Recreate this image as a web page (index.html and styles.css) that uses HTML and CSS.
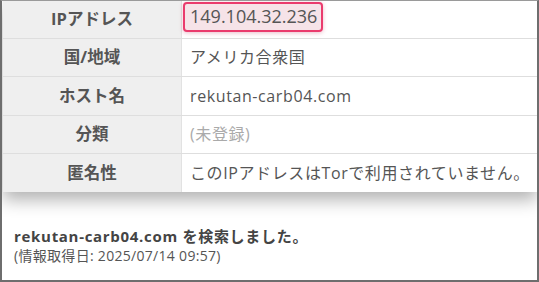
FILE: index.html
```html
<!DOCTYPE html>
<html lang="ja">
<head>
<meta charset="utf-8">
<link rel="stylesheet" href="styles.css">
</head>
<body>
<div class="frame">
  <table class="info">
    <tr><th>IPアドレス</th><td><span class="ip">149.104.32.236</span></td></tr>
    <tr><th>国/地域</th><td>アメリカ合衆国</td></tr>
    <tr><th>ホスト名</th><td>rekutan-carb04.com</td></tr>
    <tr><th>分類</th><td class="muted">(未登録)</td></tr>
    <tr><th>匿名性</th><td>このIPアドレスはTorで利用されていません。</td></tr>
  </table>
  <div class="result">
    <p class="searched">rekutan-carb04.com を検索しました。</p>
    <p class="date">(情報取得日: 2025/07/14 09:57)</p>
  </div>
</div>
</body>
</html>
```
FILE: styles.css
```css
html, body {
  margin: 0;
  padding: 0;
  background: #fff;
}
body {
  font-family: "Open Sans", "Noto Sans CJK JP", sans-serif;
  color: #555;
}
.frame {
  box-sizing: border-box;
  width: 539px;
  height: 282px;
  border: 2px solid #6e6e6e;
  border-top: 1px solid #9a9a9a;
  background: #fff;
  overflow: hidden;
  display: flex;
  flex-direction: column;
}
.info {
  position: relative;
  z-index: 1;
  margin: -1px 0 0 1px;
  width: 534px;
  border-collapse: collapse;
  background: #fff;
  box-shadow: 0 8px 16px rgba(0, 0, 0, 0.3);
}
.info th, .info td {
  height: 37.5px;
  padding: 0;
  border-bottom: 1px solid #dedede;
  font-size: 16px;
  line-height: 1;
}
.info tr:last-child th, .info tr:last-child td {
  border-bottom: none;
}
.info th {
  width: 178px;
  background: #efefef;
  border-right: 1px solid #e2e2e2;
  font-weight: bold;
  color: #555;
  text-align: center;
  font-size: 16.5px;
}
.info td {
  padding-left: 8px;
  color: #555;
  letter-spacing: 0.6px;
}
.info td.muted {
  color: #aaa;
}
.ip {
  display: inline-block;
  margin-left: -7px;
  margin-top: -4px;
  padding: 3px 4px 3px 5px;
  border: 2px solid #ea3b6d;
  border-radius: 4px;
  background: #f6e3e8;
  box-shadow: 0 1px 4px rgba(200, 60, 100, 0.35);
  font-size: 18px;
  line-height: 1.1;
  letter-spacing: 0;
}
.result {
  background: #fff;
  flex: 1;
  padding: 34px 0 0 12px;
}
.result p {
  margin: 0;
}
.searched {
  font-size: 15px;
  font-weight: bold;
  color: #444;
  line-height: 20px;
  letter-spacing: 0.7px;
}
.date {
  margin-top: 2px;
  font-size: 14px;
  color: #555;
  line-height: 20px;
  letter-spacing: 0.3px;
}
```
